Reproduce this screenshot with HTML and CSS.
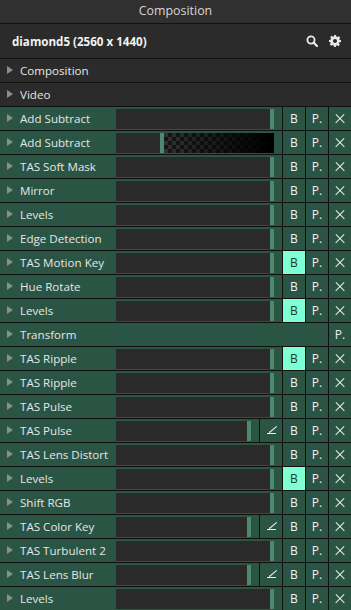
FILE: index.html
```html
<!DOCTYPE html>
<html lang="en">
<head>
    <meta charset="UTF-8">
    <title>Composition</title>
    <link rel="stylesheet" href="styles.css">
</head>
<body>
    <div class="panel">
        <div class="title-bar">Composition</div>
        <div class="comp-header">
            <span class="comp-name">diamond5 (2560 x 1440)</span>
            <svg class="hdr-icon" width="12" height="12" viewBox="0 0 12 12">
                <circle cx="5" cy="5" r="3.6" fill="none" stroke="#e8e8e8" stroke-width="1.8"/>
                <line x1="7.6" y1="7.6" x2="11" y2="11" stroke="#e8e8e8" stroke-width="2.2" stroke-linecap="round"/>
            </svg>
            <svg class="hdr-icon" width="12" height="12" viewBox="0 0 12 12">
                <path fill="#e8e8e8" fill-rule="evenodd" d="M5 0h2l.3 1.6 1.1.5 1.4-.9 1.4 1.4-.9 1.4.5 1.1L12 5v2l-1.6.3-.5 1.1.9 1.4-1.4 1.4-1.4-.9-1.1.5L7 12H5l-.3-1.6-1.1-.5-1.4.9-1.4-1.4.9-1.4-.5-1.1L0 7V5l1.6-.3.5-1.1-.9-1.4 1.4-1.4 1.4.9 1.1-.5zM6 4a2 2 0 1 0 0 4a2 2 0 1 0 0-4z"/>
            </svg>
        </div>

        <div class="row dark"><span class="arrow"></span><span class="name">Composition</span></div>
        <div class="row dark"><span class="arrow"></span><span class="name">Video</span></div>

        <div class="row">
            <span class="arrow"></span><span class="name">Add Subtract</span>
            <div class="slider"><div class="fill"></div><div class="handle"></div></div>
            <div class="btn">B</div><div class="btn">P.</div><div class="btn x"></div>
        </div>
        <div class="row">
            <span class="arrow"></span><span class="name">Add Subtract</span>
            <div class="slider"><div class="fill short"></div><div class="handle"></div><div class="checker"></div></div>
            <div class="btn">B</div><div class="btn">P.</div><div class="btn x"></div>
        </div>
        <div class="row">
            <span class="arrow"></span><span class="name">TAS Soft Mask</span>
            <div class="slider"><div class="fill"></div><div class="handle"></div></div>
            <div class="btn">B</div><div class="btn">P.</div><div class="btn x"></div>
        </div>
        <div class="row">
            <span class="arrow"></span><span class="name">Mirror</span>
            <div class="slider"><div class="fill"></div><div class="handle"></div></div>
            <div class="btn">B</div><div class="btn">P.</div><div class="btn x"></div>
        </div>
        <div class="row">
            <span class="arrow"></span><span class="name">Levels</span>
            <div class="slider"><div class="fill"></div><div class="handle"></div></div>
            <div class="btn">B</div><div class="btn">P.</div><div class="btn x"></div>
        </div>
        <div class="row">
            <span class="arrow"></span><span class="name">Edge Detection</span>
            <div class="slider"><div class="fill"></div><div class="handle"></div></div>
            <div class="btn">B</div><div class="btn">P.</div><div class="btn x"></div>
        </div>
        <div class="row">
            <span class="arrow"></span><span class="name">TAS Motion Key</span>
            <div class="slider"><div class="fill"></div><div class="handle"></div></div>
            <div class="btn on">B</div><div class="btn">P.</div><div class="btn x"></div>
        </div>
        <div class="row">
            <span class="arrow"></span><span class="name">Hue Rotate</span>
            <div class="slider"><div class="fill"></div><div class="handle"></div></div>
            <div class="btn">B</div><div class="btn">P.</div><div class="btn x"></div>
        </div>
        <div class="row">
            <span class="arrow"></span><span class="name">Levels</span>
            <div class="slider"><div class="fill"></div><div class="handle"></div></div>
            <div class="btn on">B</div><div class="btn">P.</div><div class="btn x"></div>
        </div>
        <div class="row">
            <span class="arrow"></span><span class="name">Transform</span>
            <div class="spacer"></div>
            <div class="btn">P.</div>
        </div>
        <div class="row">
            <span class="arrow"></span><span class="name">TAS Ripple</span>
            <div class="slider"><div class="fill"></div><div class="handle"></div></div>
            <div class="btn on">B</div><div class="btn">P.</div><div class="btn x"></div>
        </div>
        <div class="row">
            <span class="arrow"></span><span class="name">TAS Ripple</span>
            <div class="slider"><div class="fill"></div><div class="handle"></div></div>
            <div class="btn">B</div><div class="btn">P.</div><div class="btn x"></div>
        </div>
        <div class="row">
            <span class="arrow"></span><span class="name">TAS Pulse</span>
            <div class="slider"><div class="fill"></div><div class="handle"></div></div>
            <div class="btn">B</div><div class="btn">P.</div><div class="btn x"></div>
        </div>
        <div class="row">
            <span class="arrow"></span><span class="name">TAS Pulse</span>
            <div class="slider"><div class="fill"></div><div class="handle"></div></div>
            <div class="btn angle"></div><div class="btn">B</div><div class="btn">P.</div><div class="btn x"></div>
        </div>
        <div class="row">
            <span class="arrow"></span><span class="name">TAS Lens Distort</span>
            <div class="slider"><div class="fill"></div><div class="handle"></div></div>
            <div class="btn">B</div><div class="btn">P.</div><div class="btn x"></div>
        </div>
        <div class="row">
            <span class="arrow"></span><span class="name">Levels</span>
            <div class="slider"><div class="fill"></div><div class="handle"></div></div>
            <div class="btn on">B</div><div class="btn">P.</div><div class="btn x"></div>
        </div>
        <div class="row">
            <span class="arrow"></span><span class="name">Shift RGB</span>
            <div class="slider"><div class="fill"></div><div class="handle"></div></div>
            <div class="btn">B</div><div class="btn">P.</div><div class="btn x"></div>
        </div>
        <div class="row">
            <span class="arrow"></span><span class="name">TAS Color Key</span>
            <div class="slider"><div class="fill"></div><div class="handle"></div></div>
            <div class="btn angle"></div><div class="btn">B</div><div class="btn">P.</div><div class="btn x"></div>
        </div>
        <div class="row">
            <span class="arrow"></span><span class="name">TAS Turbulent 2</span>
            <div class="slider"><div class="fill"></div><div class="handle"></div></div>
            <div class="btn">B</div><div class="btn">P.</div><div class="btn x"></div>
        </div>
        <div class="row">
            <span class="arrow"></span><span class="name">TAS Lens Blur</span>
            <div class="slider"><div class="fill"></div><div class="handle"></div></div>
            <div class="btn angle"></div><div class="btn">B</div><div class="btn">P.</div><div class="btn x"></div>
        </div>
        <div class="row">
            <span class="arrow"></span><span class="name">Levels</span>
            <div class="slider"><div class="fill"></div><div class="handle"></div></div>
            <div class="btn">B</div><div class="btn">P.</div><div class="btn x"></div>
        </div>
    </div>
</body>
</html>
```

FILE: styles.css
```css
body {
    margin: 0;
    background: #2b2b2b;
    font-family: "Open Sans", "Noto Sans", sans-serif;
    font-size: 11.6px;
    color: #e6e6e6;
}
.panel {
    width: 351px;
    height: 610px;
    overflow: hidden;
}
.title-bar {
    height: 23px;
    line-height: 22px;
    text-align: center;
    font-size: 12.4px;
    color: #d6d6d6;
    background: #303030;
    border-bottom: 1px solid #121212;
}
.comp-header {
    height: 34px;
    display: flex;
    align-items: center;
    padding: 0 10px 0 12px;
    gap: 11px;
    background: #2b2b2b;
    border-bottom: 1px solid #121212;
}
.comp-name {
    flex: 1;
    font-weight: bold;
    font-size: 11.6px;
    color: #f2f2f2;
}
.hdr-icon {
    flex: none;
}
.row {
    height: 23px;
    display: flex;
    align-items: stretch;
    background: #2a5444;
    border-bottom: 1px solid #101010;
}
.row.dark {
    background: #2b2b2b;
}
.arrow {
    flex: none;
    width: 20px;
    position: relative;
}
.arrow::before {
    content: "";
    position: absolute;
    left: 7px;
    top: 7px;
    border-left: 6px solid #8a8f8c;
    border-top: 4px solid transparent;
    border-bottom: 4px solid transparent;
}
.name {
    flex: none;
    width: 96px;
    line-height: 23px;
    white-space: nowrap;
    overflow: hidden;
}
.slider {
    flex: 1;
    display: flex;
    margin: 2px 8px 1px 0;
    background: #2a2a2a;
}
.slider .fill {
    flex: 1;
}
.slider .fill.short {
    flex: 0 0 44px;
}
.slider .handle {
    flex: 0 0 4px;
    background: #4b8a6d;
}
.slider .checker {
    flex: 0 0 110px;
    background:
        linear-gradient(to right, rgba(0, 0, 0, 0.15), #000 95%),
        conic-gradient(#1a1a1a 25%, #3a3a3a 0 50%, #1a1a1a 0 75%, #3a3a3a 0) 0 0 / 8px 8px;
}
.spacer {
    flex: 1;
}
.btn {
    flex: none;
    width: 22px;
    border-left: 1px solid #101010;
    display: flex;
    align-items: center;
    justify-content: center;
    font-size: 12px;
    color: #f0f0f0;
}
.btn.on {
    background: #7fffd4;
    color: #1f3b31;
}
.btn.x::before,
.btn.x::after {
    content: "";
    position: absolute;
    width: 12px;
    height: 1.3px;
    background: #f0f0f0;
}
.btn.x {
    position: relative;
}
.btn.x::before {
    transform: rotate(45deg);
}
.btn.x::after {
    transform: rotate(-45deg);
}
.btn.angle {
    position: relative;
}
.btn.angle::before {
    content: "";
    position: absolute;
    left: 7px;
    top: 14px;
    width: 9px;
    height: 1.3px;
    background: #f0f0f0;
}
.btn.angle::after {
    content: "";
    position: absolute;
    left: 8px;
    top: 9.5px;
    width: 10px;
    height: 1.3px;
    background: #f0f0f0;
    transform: rotate(-40deg);
}
```
